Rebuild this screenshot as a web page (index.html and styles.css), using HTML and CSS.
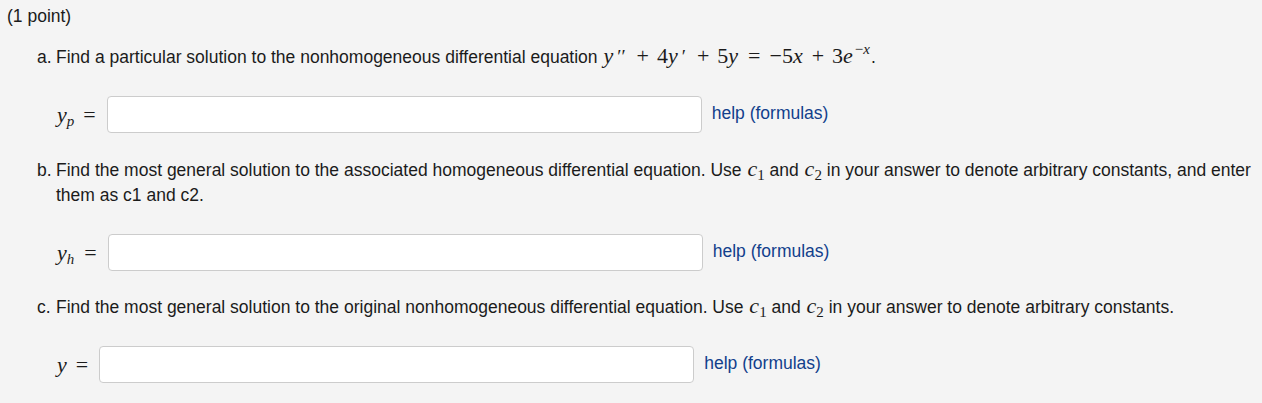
FILE: index.html
```html
<!DOCTYPE html>
<html>
<head>
<meta charset="utf-8">
<link rel="stylesheet" href="styles.css">
</head>
<body>
<div class="problem">
  <div class="points">(1 point)</div>

  <div class="part q-a">
    <span class="marker">a.</span>
    <div class="content">Find a particular solution to the nonhomogeneous differential equation <span class="math"><i>y</i><span class="prime">&#8242;&#8242;</span><span class="op">+</span>4<i>y</i><span class="prime">&#8242;</span><span class="op">+</span>5<i>y</i><span class="rel">=</span>&#8722;5<i>x</i><span class="op">+</span>3<i>e</i><sup>&#8722;<i>x</i></sup></span>.</div>
  </div>
  <div class="answer-row row-a">
    <span class="label math"><i>y</i><sub><i>p</i></sub><span class="rel">=</span></span>
    <input class="answer" type="text">
    <a class="help" href="#">help (formulas)</a>
  </div>

  <div class="part q-b">
    <span class="marker">b.</span>
    <div class="content">Find the most general solution to the associated homogeneous differential equation. Use <span class="math"><i>c</i><sub>1</sub></span> and <span class="math"><i>c</i><sub>2</sub></span> in your answer to denote arbitrary constants, and enter them as c1 and c2.</div>
  </div>
  <div class="answer-row row-b">
    <span class="label math"><i>y</i><sub><i>h</i></sub><span class="rel">=</span></span>
    <input class="answer" type="text">
    <a class="help" href="#">help (formulas)</a>
  </div>

  <div class="part q-c">
    <span class="marker">c.</span>
    <div class="content">Find the most general solution to the original nonhomogeneous differential equation. Use <span class="math"><i>c</i><sub>1</sub></span> and <span class="math"><i>c</i><sub>2</sub></span> in your answer to denote arbitrary constants.</div>
  </div>
  <div class="answer-row row-c">
    <span class="label math"><i>y</i><span class="rel">=</span></span>
    <input class="answer" type="text">
    <a class="help" href="#">help (formulas)</a>
  </div>
</div>
</body>
</html>
```

FILE: styles.css
```css
html, body {
  margin: 0;
  padding: 0;
  background: #f4f4f4;
}
body {
  font-family: "Liberation Sans", Arial, sans-serif;
  font-size: 17.5px;
  color: #1b1b1b;
}
.problem {
  padding: 6px 0 0 7px;
}
.points {
  line-height: 20px;
}
.part {
  display: flex;
  line-height: 25px;
  padding-left: 30px;
  padding-right: 8px;
}
.marker {
  width: 19px;
  flex: none;
}
.content {
  flex: 1;
}
.q-a { margin-top: 19px; }
.q-b { margin-top: 25px; }
.q-c { margin-top: 24px; }

.math {
  font-family: "Liberation Serif", "Times New Roman", serif;
  font-size: 22px;
  line-height: 1;
  white-space: nowrap;
}
.content .math {
  margin-left: 1px;
}
.math i {
  font-style: italic;
  padding-right: 1px;
}
.math .prime {
  margin-left: 3px;
  margin-right: 3px;
  font-size: 19px;
}
.math .op {
  margin: 0 8px;
}
.math .rel {
  margin: 0 9px;
}
.math sub, .math sup {
  font-size: 15px;
  line-height: 0;
}
.math sub { vertical-align: -4px; margin-left: -1px; }
.math sup { vertical-align: 9px; margin-left: 1px; }

.answer-row {
  display: flex;
  align-items: center;
  padding-left: 50px;
  margin-top: 26px;
  height: 37px;
}
.label {
  white-space: nowrap;
}
.label .rel {
  margin: 0 0 0 8px;
}
.row-b .label .rel {
  margin-left: 9px;
}
.row-c .label .rel {
  margin-left: 8px;
}
.answer {
  width: 595px;
  height: 37px;
  box-sizing: border-box;
  border: 1px solid #cccccc;
  border-radius: 4px;
  background: #ffffff;
  margin: 0 0 0 11px;
  padding: 4px 6px;
}
.help {
  margin-left: 10px;
  color: #123f8c;
  text-decoration: none;
  position: relative;
  top: -1px;
}
```
